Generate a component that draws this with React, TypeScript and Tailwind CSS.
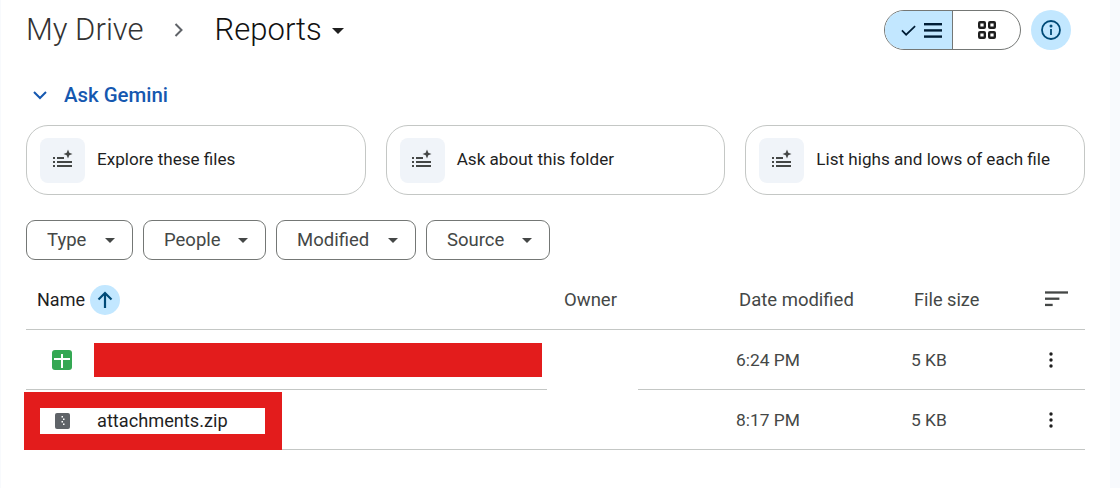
/**
 * Drive folder view
 * Breadcrumb, Ask Gemini suggestions, filters and the file table
 */

const SUGGESTIONS = ['Explore these files', 'Ask about this folder', 'List highs and lows of each file'];

const FILTERS = [
  { label: 'Type', width: 'w-[107px]' },
  { label: 'People', width: 'w-[123px]' },
  { label: 'Modified', width: 'w-[140px]' },
  { label: 'Source', width: 'w-[124px]' },
];

const ROW_GRID = 'grid grid-cols-[538px_175px_175px_1fr] items-center';

function Caret({ className }: { className: string }) {
  return (
    <svg viewBox="0 0 12 6" className={className} fill="currentColor">
      <path d="M0 0h12L6 6z" />
    </svg>
  );
}

function SparkList() {
  return (
    <svg width="24" height="24" viewBox="0 0 24 24" fill="#444746">
      <path d="M17 1.5l1.3 3.2 3.2 1.3-3.2 1.3L17 10.5l-1.3-3.2L12.5 6l3.2-1.3z" />
      <rect x="2" y="9" width="2" height="2" />
      <rect x="6" y="9" width="7" height="2" />
      <rect x="2" y="13" width="2" height="2" />
      <rect x="6" y="13" width="15" height="2" />
      <rect x="2" y="17" width="2" height="2" />
      <rect x="6" y="17" width="15" height="2" />
    </svg>
  );
}

function MoreButton() {
  return (
    <svg width="4" height="16" viewBox="0 0 4 16" fill="#1f1f1f" className="mt-[2px]">
      <circle cx="2" cy="2" r="1.7" />
      <circle cx="2" cy="8" r="1.7" />
      <circle cx="2" cy="14" r="1.7" />
    </svg>
  );
}

export default function App() {
  return (
    <div className="h-[488px] w-[1120px] overflow-hidden bg-[#f8fafd] pl-px pr-[10px] font-['Roboto',sans-serif]">
      <div className="h-full bg-white px-[25px] pt-[10px]">
        {/* Breadcrumb + view toggle */}
        <div className="flex h-[40px] items-center pr-[14px]">
          <span className="text-[31px] font-light text-[#333]">My Drive</span>
          <svg width="12" height="16" viewBox="0 0 12 16" className="ml-[29px]" fill="none" stroke="#5f6368" strokeWidth="2">
            <path d="M2.5 2l6 6-6 6" />
          </svg>
          <span className="ml-[30px] text-[31px] font-light text-[#111]">Reports</span>
          <Caret className="ml-[10px] mt-[2px] h-[6px] w-[12px] text-[#1f1f1f]" />

          <div className="ml-auto mr-[10px] flex h-[40px] w-[137px] overflow-hidden rounded-full border border-[#747775]">
            <div className="flex w-[68px] items-center justify-center gap-[7px] border-r border-[#747775] bg-[#c2e7ff] pl-1">
              <svg width="17" height="14" viewBox="0 0 18 14" fill="none" stroke="#001d35" strokeWidth="1.8">
                <path d="M2 7.5l4.5 4.5L16 3" />
              </svg>
              <svg width="18" height="15" viewBox="0 0 18 15" fill="#001d35">
                <rect y="0" width="18" height="2.4" />
                <rect y="6.2" width="18" height="2.4" />
                <rect y="12.4" width="18" height="2.4" />
              </svg>
            </div>
            <div className="flex flex-1 items-center justify-center">
              <svg width="18" height="18" viewBox="0 0 18 18" fill="none" stroke="#1f1f1f" strokeWidth="2.4">
                <rect x="1.2" y="1.2" width="5.6" height="5.6" rx="0.8" />
                <rect x="11.2" y="1.2" width="5.6" height="5.6" rx="0.8" />
                <rect x="1.2" y="11.2" width="5.6" height="5.6" rx="0.8" />
                <rect x="11.2" y="11.2" width="5.6" height="5.6" rx="0.8" />
              </svg>
            </div>
          </div>
          <div className="flex h-[40px] w-[40px] items-center justify-center rounded-full bg-[#c2e7ff]">
            <svg width="22" height="22" viewBox="0 0 22 22" fill="none" stroke="#004a77" strokeWidth="1.8">
              <circle cx="11" cy="11" r="9" />
              <path d="M11 10v6" />
              <circle cx="11" cy="7" r="0.6" fill="#004a77" />
            </svg>
          </div>
        </div>

        {/* Ask Gemini */}
        <div className="mt-[33px] flex h-[24px] items-center pl-[7px]">
          <svg width="14" height="9" viewBox="0 0 14 9" fill="none" stroke="#1558b0" strokeWidth="2">
            <path d="M1 1l6 6 6-6" />
          </svg>
          <span className="ml-[17px] text-[20.4px] font-medium text-[#1558b0]">Ask Gemini</span>
        </div>

        <div className="mt-[18px] flex gap-[20px]">
          {SUGGESTIONS.map((text) => (
            <div
              key={text}
              className="flex h-[70px] w-[340px] items-center rounded-[22px] border border-[#c4c7c5] pl-[13px]"
            >
              <div className="flex h-[45px] w-[45px] items-center justify-center rounded-[8px] bg-[#f0f4f9]">
                <SparkList />
              </div>
              <span className="ml-[12px] text-[17.1px] text-[#1f1f1f]">{text}</span>
            </div>
          ))}
        </div>

        {/* Filters */}
        <div className="mt-[25px] flex gap-[10px]">
          {FILTERS.map((filter) => (
            <div
              key={filter.label}
              className={`flex h-[40px] ${filter.width} items-center justify-between rounded-[9px] border border-[#747775] pl-[20px] pr-[17px] text-[18.5px] text-[#444746]`}
            >
              <span className="mt-[2px]">{filter.label}</span>
              <Caret className="h-[5px] w-[10px] text-[#444746]" />
            </div>
          ))}
        </div>

        {/* File table */}
        <div className={`${ROW_GRID} mt-[10px] h-[60px] border-b border-[#c4c7c5] text-[18.5px] text-[#444746]`}>
          <div className="flex items-center pl-[11px]">
            <span className="text-[18px] text-[#1f1f1f]">Name</span>
            <span className="ml-[5px] flex h-[30px] w-[30px] items-center justify-center rounded-full bg-[#c2e7ff]">
              <svg width="16" height="18" viewBox="0 0 16 18" fill="none" stroke="#004a77" strokeWidth="2.2">
                <path d="M8 17V2M1.5 8.5L8 2l6.5 6.5" />
              </svg>
            </span>
          </div>
          <span className="mt-[2px]">Owner</span>
          <span className="mt-[2px]">Date modified</span>
          <div className="flex items-center justify-between pr-[17px]">
            <span className="text-[18.2px]">File size</span>
            <svg width="23" height="16" viewBox="0 0 24 16" fill="#444746">
              <rect width="24" height="2.4" />
              <rect y="6.5" width="15" height="2.4" />
              <rect y="13" width="8" height="2.4" />
            </svg>
          </div>
        </div>

        <div className={`${ROW_GRID} h-[60px] border-b border-[#c4c7c5] text-[17.4px] text-[#444746]`}>
          <div className="flex items-center pl-[26px]">
            <svg width="20" height="20" viewBox="0 0 20 20">
              <rect width="20" height="20" rx="3" fill="#34a853" />
              <path d="M2 9h16M10 4v14" stroke="#fff" strokeWidth="2" />
            </svg>
            <div className="ml-[22px] h-[34px] w-[448px] bg-[#e31c1c]" />
          </div>
          <span />
          <span className="-ml-[3px] mt-[2px]">6:24 PM</span>
          <div className="flex items-center justify-between pr-[32px]">
            <span className="-ml-[3px] mt-[2px]">5 KB</span>
            <MoreButton />
          </div>
        </div>

        <div className={`${ROW_GRID} relative h-[60px] border-b border-[#c4c7c5] text-[17.4px] text-[#444746]`}>
          {/* Redaction box over the name cell, and the gap it left in the rule above */}
          <div className="absolute -top-px left-[521px] h-[2px] w-[91px] bg-white" />
          <div className="absolute -left-[2px] top-[2px] flex h-[58px] w-[258px] items-center bg-[#e31c1c] pl-[16px]">
            <div className="flex h-[26px] w-[225px] items-center bg-white pl-[15px]">
              <svg width="15" height="16" viewBox="0 0 15 16">
                <rect width="15" height="16" rx="2" fill="#5f6368" />
                <path d="M6.5 3h1.5v1.5H6.5zM8 5.5h1.5V7H8zM6.5 8H8v1.5H6.5zM8 10.5h1.5V12H8z" fill="#fff" />
              </svg>
              <span className="ml-[27px] text-[18.2px] text-[#1f1f1f]">attachments.zip</span>
            </div>
          </div>
          <span />
          <span />
          <span className="-ml-[3px] mt-[2px]">8:17 PM</span>
          <div className="flex items-center justify-between pr-[32px]">
            <span className="-ml-[3px] mt-[2px]">5 KB</span>
            <MoreButton />
          </div>
        </div>
      </div>
    </div>
  );
}
